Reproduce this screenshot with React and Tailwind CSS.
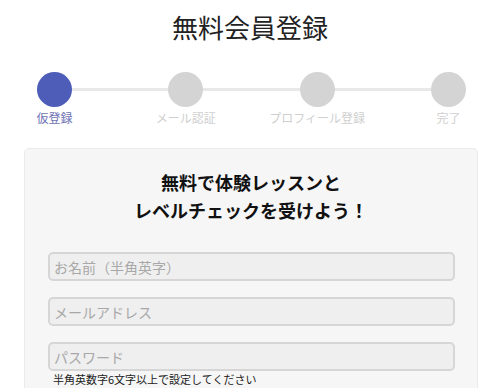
import React from "react";

const steps = [
  { label: "仮登録", active: true },
  { label: "メール認証", active: false },
  { label: "プロフィール登録", active: false },
  { label: "完了", active: false },
];

const fields = ["お名前（半角英字）", "メールアドレス", "パスワード"];

export default function App() {
  return (
    <div
      className="w-[500px] h-[388px] overflow-hidden bg-white"
      style={{ fontFamily: '"Noto Sans CJK JP", "Noto Sans", sans-serif' }}
    >
      <h1 className="pt-[9px] text-center text-[26px] leading-[36px] font-normal text-[#222]">
        無料会員登録
      </h1>

      {/* Stepper */}
      <div className="mt-[27px] ml-[37px] mr-[34px]">
        <div className="flex items-center">
          {steps.map((s, i) => (
            <React.Fragment key={s.label}>
              {i > 0 && <div className="flex-1 h-[3px] bg-[#e8e8e8]" />}
              <div
                className={`w-[35px] h-[35px] rounded-full shrink-0 ${
                  s.active ? "bg-[#4e5eb8]" : "bg-[#d4d4d4]"
                }`}
              />
            </React.Fragment>
          ))}
        </div>
        <div className="flex mt-[3px]">
          {steps.map((s, i) => (
            <React.Fragment key={s.label}>
              {i > 0 && <div className="flex-1" />}
              <div className="w-[35px] shrink-0 flex justify-center">
                <span
                  className={`whitespace-nowrap text-[12px] leading-[16px] ${
                    s.active ? "text-[#6c71b3]" : "text-[#cfcfcf]"
                  }`}
                >
                  {s.label}
                </span>
              </div>
            </React.Fragment>
          ))}
        </div>
      </div>

      {/* Card */}
      <div className="mt-[22px] ml-[24px] w-[454px] h-[300px] bg-[#f6f6f6] border border-[#ebebeb] rounded-[5px] px-[23px] pt-[19px]">
        <h2 className="text-center text-[18px] leading-[28px] font-bold text-[#111]">
          無料で体験レッスンと
          <br />
          レベルチェックを受けよう！
        </h2>
        <div className="mt-[28px] flex flex-col gap-[16px]">
          {fields.map((f) => (
            <input
              key={f}
              placeholder={f}
              className="w-[407px] h-[29px] bg-[#efefef] border-2 border-[#d6d6d6] rounded-[5px] px-[4px] text-[14px] placeholder:text-[#a8a8a8] outline-none"
            />
          ))}
        </div>
        <p className="mt-[1px] pl-[5px] text-[11px] leading-[14px] text-[#222]">
          半角英数字6文字以上で設定してください
        </p>
      </div>
    </div>
  );
}
